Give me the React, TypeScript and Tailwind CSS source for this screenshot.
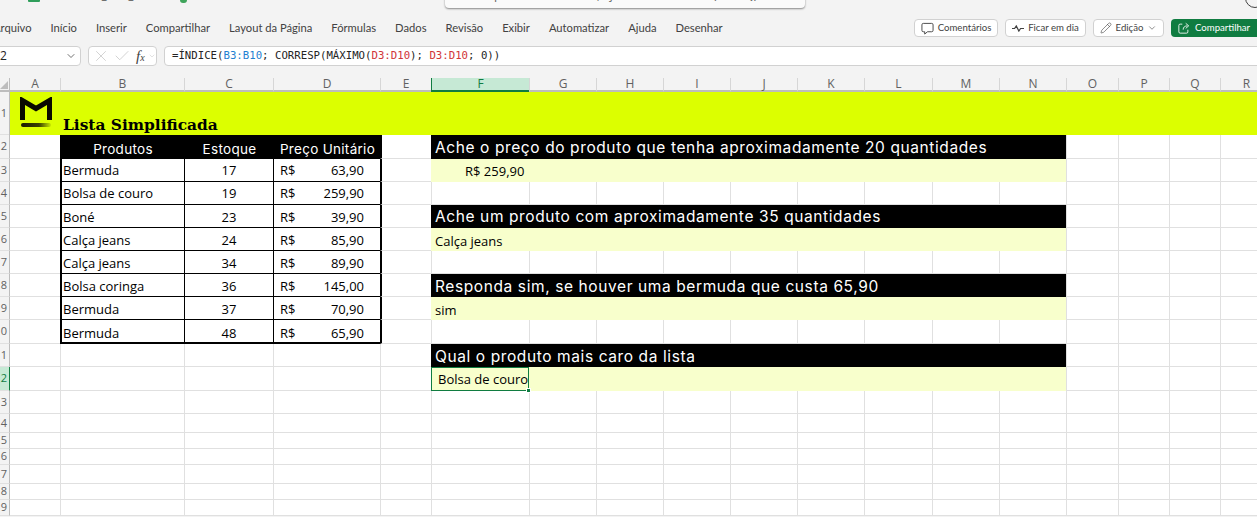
import React from "react";
import { Check, ChevronDown, Pencil, X } from "lucide-react";

const tabs = ["Arquivo", "Início", "Inserir", "Compartilhar", "Layout da Página", "Fórmulas", "Dados", "Revisão", "Exibir", "Automatizar", "Ajuda", "Desenhar"];
const columns = ["A", "B", "C", "D", "E", "F", "G", "H", "I", "J", "K", "L", "M", "N", "O", "P", "Q", "R"];

const products = [
  ["Bermuda", "17", "63,90"],
  ["Bolsa de couro", "19", "259,90"],
  ["Boné", "23", "39,90"],
  ["Calça jeans", "24", "85,90"],
  ["Calça jeans", "34", "89,90"],
  ["Bolsa coringa", "36", "145,00"],
  ["Bermuda", "37", "70,90"],
  ["Bermuda", "48", "65,90"],
];

// right side blocks, keyed by sheet row
const questions: Record<number, string> = {
  2: "Ache o preço do produto que tenha aproximadamente 20 quantidades",
  5: "Ache um produto com aproximadamente 35 quantidades",
  8: "Responda sim, se houver uma bermuda que custa 65,90",
  11: "Qual o produto mais caro da lista",
};
const answers: Record<number, string> = { 3: "R$ 259,90", 6: "Calça jeans", 9: "sim" };

const gridCell = "border-l border-b border-[#e0e0e0]";
const cellText = "font-['Open_Sans',sans-serif] text-[13px] text-black";
const tableHead = "bg-black flex items-center justify-center pt-[5px] pl-[2px] font-['Inter',sans-serif] text-[13.5px] tracking-[0.3px] text-white whitespace-nowrap";

// text sits a little lower further down the sheet
function rowPad(n: number) {
  if (n === 10) return "pt-[6px]";
  if (n >= 5) return "pt-[4px]";
  return "pt-[2px]";
}

function Logo() {
  return (
    <svg viewBox="0 0 33 33" className="w-[33px] h-[33px] shrink-0 mb-[5px]">
      <defs>
        <linearGradient id="fade" x1="0" x2="1" y1="0" y2="0">
          <stop offset="0" stopColor="#1a1a00" />
          <stop offset="0.6" stopColor="#3a4000" />
          <stop offset="1" stopColor="#c8e800" />
        </linearGradient>
      </defs>
      <path d="M2.500 23V3.500L16 11.500L29.500 3.500V23" fill="none" stroke="#0a0a00" strokeWidth="5" strokeLinejoin="miter" />
      <rect x="1" y="26" width="30" height="4" rx="2" fill="url(#fade)" />
    </svg>
  );
}

function OuterRow({ n, children }: { n: number; children?: React.ReactNode }) {
  const active = n === 12;
  return (
    <>
      <div
        className={
          active
            ? "flex items-center justify-end pr-[2px] overflow-hidden bg-[#c6e9d5] border-b border-b-[#e0e0e0] font-['Open_Sans',sans-serif] text-[11px] text-[#107c41]"
            : "flex items-center justify-end pr-[2px] overflow-hidden bg-[#f3f3f3] border-b border-b-[#e0e0e0] font-['Open_Sans',sans-serif] text-[11px] text-[#616161]"
        }
      >
        {n}
      </div>
      {children}
    </>
  );
}

function Blank({ count = 1 }: { count?: number }) {
  return (
    <>
      {Array.from({ length: count }).map((_, i) => (
        <div key={i} className={gridCell} />
      ))}
    </>
  );
}

function RightBlock({ n }: { n: number }) {
  if (questions[n]) {
    return (
      <div className={`col-span-9 bg-black flex items-center pl-[4px] ${n === 5 ? "pt-0" : "pt-[2px]"} font-['Inter',sans-serif] text-[15.5px] tracking-[0.6px] text-white whitespace-nowrap`}>
        {questions[n]}
      </div>
    );
  }
  if (answers[n]) {
    return (
      <div className={n === 3 ? `col-span-9 bg-[#f8ffcc] flex items-center pl-[34px] ${rowPad(n)} ${cellText}` : `col-span-9 bg-[#f8ffcc] flex items-center pl-[4px] ${rowPad(n)} ${cellText}`}>
        {answers[n]}
      </div>
    );
  }
  if (n === 12) {
    return (
      <>
        <div className={`relative flex items-center pl-[6px] pt-[2px] bg-[#f8ffcc] border border-[#107c41] whitespace-nowrap ${cellText}`}>
          Bolsa de couro
          <span className="absolute right-[-3px] bottom-[-3px] w-[5px] h-[5px] bg-[#107c41] border border-white" />
        </div>
        <div className="col-span-8 bg-[#f8ffcc]" />
      </>
    );
  }
  return <Blank count={9} />;
}

function Sheet() {
  const rowNumbers = Array.from({ length: 19 }, (_, i) => i + 1);
  return (
    <div className="grid grid-cols-[9px_51px_124px_89px_107px_51px_98px_67px_67px_67px_67px_67px_68px_67px_67px_52px_51px_51px_52px] grid-rows-[14px_43px_24px_23px_23px_23px_23px_23px_23px_23px_24px_23px_24px_23px_19px_16px_16px_19px_16px_16px] bg-white">
      {/* Column headers */}
      <div className="relative bg-[#f3f3f3] border-b-2 border-b-[#bdbdbd]">
        <span className="absolute right-[1px] bottom-[1px] w-0 h-0 border-l-[8px] border-l-transparent border-b-[8px] border-b-[#bdbdbd]" />
      </div>
      {columns.map((c) => (
        <div
          key={c}
          className={
            c === "F"
              ? "flex items-center justify-center bg-[#c6e9d5] border-l border-l-[#107c41] border-b-2 border-b-[#107c41] font-['Open_Sans',sans-serif] text-[12px] leading-none text-[#107c41]"
              : c === "A"
                ? "flex items-center justify-center bg-[#f3f3f3] border-l border-l-[#bdbdbd] border-b-2 border-b-[#bdbdbd] font-['Open_Sans',sans-serif] text-[12px] leading-none text-[#616161]"
                : "flex items-center justify-center bg-[#f3f3f3] border-l border-l-[#d6d6d6] border-b-2 border-b-[#bdbdbd] font-['Open_Sans',sans-serif] text-[12px] leading-none text-[#616161]"
          }
        >
          {c}
        </div>
      ))}

      {rowNumbers.map((n) => {
        if (n === 1) {
          return (
            <OuterRow key={n} n={n}>
              <div className="col-span-18 bg-[#dcff00] border-l border-l-[#bdbdbd] flex items-end pl-[10px]">
                <Logo />
                <span className="ml-[10px] font-['DejaVu_Serif',serif] font-bold text-[15.4px] leading-[20px] text-black whitespace-nowrap">
                  Lista Simplificada
                </span>
              </div>
            </OuterRow>
          );
        }
        const product = products[n - 3];
        return (
          <OuterRow key={n} n={n}>
            <div className={n === 12 ? "border-l border-l-[#107c41] border-b border-b-[#e0e0e0]" : "border-l border-l-[#bdbdbd] border-b border-b-[#e0e0e0]"} />
            {n === 2 && (
              <>
                <div className={tableHead}>Produtos</div>
                <div className={tableHead}>Estoque</div>
                <div className={tableHead}>Preço Unitário</div>
              </>
            )}
            {product && (
              <>
                <div className={`border-l-2 border-b border-black flex items-center pl-[1px] ${n === 10 ? "border-b-2" : ""} ${rowPad(n)} ${cellText}`}>{product[0]}</div>
                <div className={`border-l border-b border-black flex items-center justify-center ${n === 10 ? "border-b-2" : ""} ${rowPad(n)} ${cellText}`}>{product[1]}</div>
                <div className={`border-l border-b border-black flex items-center justify-between pl-[6px] pr-[16px] ${n === 10 ? "border-b-2" : ""} ${rowPad(n)} ${cellText}`}>
                  <span>R$</span>
                  <span>{product[2]}</span>
                </div>
              </>
            )}
            {!product && n !== 2 && <Blank count={3} />}
            {n >= 2 && n <= 10 ? <div className="border-l-2 border-l-black border-b border-b-[#e0e0e0]" /> : <Blank />}
            <RightBlock n={n} />
            <Blank count={4} />
          </OuterRow>
        );
      })}
    </div>
  );
}

function ActionButton({ width, children }: { width: string; children: React.ReactNode }) {
  return (
    <button className={`${width} h-[18px] flex items-center justify-center gap-[4px] bg-white border border-[#d1d1d1] rounded-[4px] font-['Lato',sans-serif] text-[9.6px] text-[#424242] whitespace-nowrap`}>
      {children}
    </button>
  );
}

export default function App() {
  return (
    <div className="w-[1257px] h-[517px] overflow-hidden bg-[#f3f3f3] flex flex-col">
      {/* Title bar, cut off by the top of the picture */}
      <div className="relative h-[18px] shrink-0">
        <div className="absolute left-[28px] top-[-4px] w-[12px] h-[6px] bg-[#2f9e5b] rounded-b-[1px]" />
        <span className="absolute left-[61px] top-[-12px] font-['Open_Sans',sans-serif] text-[11px] leading-[14px] text-[#424242]">Planilha_com_desafio</span>
        <div className="absolute left-[180px] top-[-3px] w-[7px] h-[6px] rounded-full bg-[#3fa45b]" />
        <div className="absolute left-[445px] top-[-10px] w-[360px] h-[18px] bg-[#fafafa] rounded-[4px] shadow-[0_1px_2px_rgba(0,0,0,0.45)] overflow-hidden">
          <span className="absolute left-[25px] top-[-2px] font-['Open_Sans',sans-serif] text-[12px] leading-[14px] text-[#616161] whitespace-nowrap">
            Pesquisar ferramentas, ajuda e muito mais (Alt + Q)
          </span>
        </div>
        <div className="absolute left-[1245px] top-[-14px] w-[20px] h-[22px] rounded-full border border-[#424242]" />
      </div>

      {/* Ribbon tabs and share actions */}
      <div className="h-[20px] shrink-0 flex items-center">
        <div className="flex items-center gap-[19px] ml-[-7px] font-['Lato',sans-serif] text-[11.2px] text-[#424242] whitespace-nowrap">
          {tabs.map((t) => (
            <span key={t}>{t}</span>
          ))}
        </div>
        <div className="ml-auto flex items-center gap-[7px] mr-[-14px]">
          <ActionButton width="w-[84px]">
            <svg viewBox="0 0 14 14" className="w-[13px] h-[13px]" fill="none" stroke="#424242" strokeWidth="1">
              <path d="M2.500 1.500h9a1.500 1.500 0 0 1 1.500 1.500v6a1.500 1.500 0 0 1-1.500 1.500H7L4 13v-2.500H2.500A1.500 1.500 0 0 1 1 9V3a1.500 1.500 0 0 1 1.500-1.500z" />
            </svg>
            Comentários
          </ActionButton>
          <ActionButton width="w-[81px]">
            <svg viewBox="0 0 14 8" className="w-[12px] h-[7px]" fill="none" stroke="#424242" strokeWidth="1.4">
              <path d="M0 4h3l2-3 3 6 2-3h4" />
            </svg>
            Ficar em dia
          </ActionButton>
          <ActionButton width="w-[71px]">
            <Pencil className="w-[12px] h-[12px]" strokeWidth={1.2} />
            Edição
            <ChevronDown className="w-[10px] h-[10px]" strokeWidth={1.4} />
          </ActionButton>
          <button className="w-[100px] h-[18px] flex items-center gap-[5px] pl-[7px] bg-[#107c41] rounded-[4px] font-['Lato',sans-serif] text-[9.6px] text-white whitespace-nowrap">
            <svg viewBox="0 0 14 14" className="w-[12px] h-[12px]" fill="none" stroke="white" strokeWidth="1">
              <path d="M5 2.500H2.500A1.500 1.500 0 0 0 1 4v7.500A1.500 1.500 0 0 0 2.500 13h7.500a1.500 1.500 0 0 0 1.500-1.500V9M6 9c0-3 2-4.500 5-4.500M9 1.500l3.500 3-3.500 3" />
            </svg>
            Compartilhar
            <ChevronDown className="w-[10px] h-[10px]" strokeWidth={1.4} />
          </button>
        </div>
      </div>

      {/* Formula bar */}
      <div className="h-[20px] mt-[8px] shrink-0 flex items-stretch">
        <div className="w-[101px] ml-[-20px] pl-[6px] pr-[3px] flex items-center justify-between bg-white border border-[#d1d1d1] rounded-[4px] font-['Open_Sans',sans-serif] text-[12px] text-[#242424]">
          F12
          <ChevronDown className="w-[12px] h-[12px] text-[#424242]" strokeWidth={1.5} />
        </div>
        <div className="w-[69px] ml-[7px] pl-[3px] flex items-center gap-[3px] bg-white border border-[#d1d1d1] rounded-[4px] text-[#c4c4c4]">
          <X className="w-[18px] h-[18px] shrink-0" strokeWidth={1} />
          <Check className="w-[18px] h-[18px] shrink-0" strokeWidth={1} />
          <span className="ml-[2px] font-['Liberation_Serif',serif] italic text-[15px] leading-none text-[#424242] whitespace-nowrap">
            f<span className="text-[10px]">x</span>
          </span>
          <ChevronDown className="w-[8px] h-[8px] shrink-0" strokeWidth={1.5} />
        </div>
        <div className="flex-1 ml-[7px] mr-[-10px] pl-[7px] flex items-center bg-white border border-[#d1d1d1] rounded-l-[4px] font-['DejaVu_Sans_Mono',monospace] text-[10.7px] text-[#242424] whitespace-pre">
          =ÍNDICE(<span className="text-[#1f7fd1]">B3:B10</span>; CORRESP(MÁXIMO(<span className="text-[#d13438]">D3:D10</span>); <span className="text-[#d13438]">D3:D10</span>; 0))
        </div>
      </div>

      <div className="h-[12px] shrink-0" />
      <Sheet />
    </div>
  );
}
